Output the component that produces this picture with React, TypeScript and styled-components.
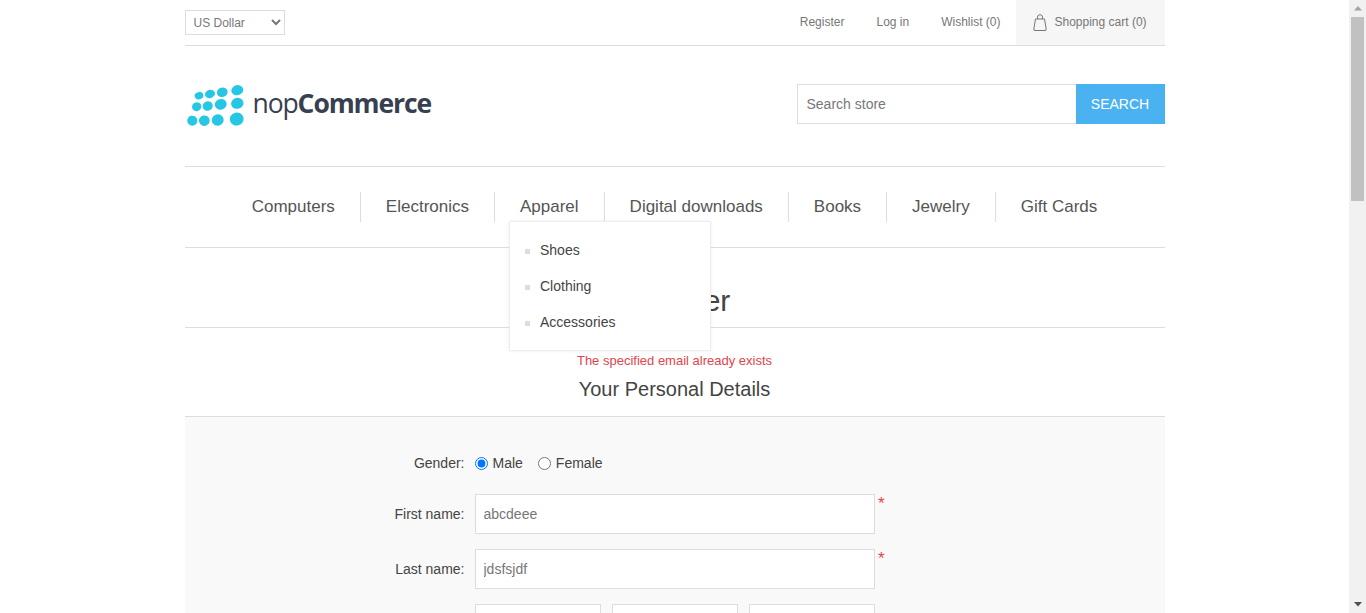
import React from "react";
import styled, { createGlobalStyle } from "styled-components";

const GlobalStyle = createGlobalStyle`
  html, body, #root { height: 100%; }
  body {
    margin: 0;
    overflow: hidden;
    background: #fff;
    color: #444;
    font-family: "Liberation Sans", Arial, sans-serif;
    font-size: 14px;
  }
  * { box-sizing: border-box; }
`;

const Viewport = styled.div`
  display: flex;
  height: 100%;
`;

const Page = styled.div`
  flex: 1;
  min-width: 0;
  overflow: hidden;
`;

const ScrollTrack = styled.div`
  display: flex;
  flex-direction: column;
  align-items: center;
  flex: none;
  width: 17px;
  background: #f1f1f1;
`;

const ScrollArrow = styled.div`
  display: flex;
  align-items: center;
  justify-content: center;
  flex: none;
  width: 17px;
  height: 17px;
`;

const ScrollThumb = styled.div`
  flex: none;
  width: 13px;
  height: 184px;
  background: #c1c1c1;
`;

const ScrollSpacer = styled.div`
  flex: 1;
`;

const Master = styled.div`
  width: 980px;
  margin: 0 auto;
`;

const TopBar = styled.div`
  display: flex;
  align-items: center;
  justify-content: space-between;
  height: 46px;
  border-bottom: 1px solid #ddd;
`;

const CurrencySelect = styled.select`
  width: 100px;
  height: 25px;
  padding: 0 4px;
  border: 1px solid #ddd;
  background: #fff;
  color: #777;
  font-family: inherit;
  font-size: 12px;
`;

const TopLinks = styled.div`
  display: flex;
  align-items: center;
  height: 45px;
`;

const TopLink = styled.a`
  margin-right: 32px;
  padding-bottom: 1px;
  color: #777;
  font-size: 12px;
  text-decoration: none;

  &:last-of-type {
    margin-right: 15px;
  }
`;

const CartLink = styled.div`
  display: flex;
  align-items: center;
  gap: 8px;
  width: 149px;
  height: 45px;
  padding: 0 0 1px 17px;
  background: #f6f6f6;
  color: #777;
  font-size: 12px;
`;

const HeaderRow = styled.div`
  display: flex;
  align-items: center;
  justify-content: space-between;
  height: 120px;
  padding-bottom: 4px;
`;

const Logo = styled.a`
  display: flex;
  align-items: center;
  height: 50px;
  padding-left: 2px;
`;

const LogoMarkBox = styled.svg`
  margin-top: 3px;
`;

const LogoText = styled.span`
  margin: -2px 0 0 9px;
  color: #374050;
  font-family: "Open Sans", sans-serif;
  font-size: 26.5px;
  font-weight: 400;
  letter-spacing: -1.1px;

  b {
    font-weight: 700;
  }
`;

const SearchForm = styled.form`
  display: flex;
  width: 368px;
  height: 40px;
`;

const SearchInput = styled.input`
  flex: 1;
  min-width: 0;
  padding: 0 9px;
  border: 1px solid #ddd;
  border-right: 0;
  outline: none;
  color: #777;
  font-family: inherit;
  font-size: 14px;

  &::placeholder {
    color: #777;
    opacity: 1;
  }
`;

const SearchButton = styled.button`
  width: 89px;
  border: 0;
  background: #4ab2f1;
  color: #fff;
  font-family: inherit;
  font-size: 14px;
`;

const Nav = styled.ul`
  display: flex;
  justify-content: center;
  align-items: center;
  height: 82px;
  margin: 0;
  padding: 0 0 1px;
  border-top: 1px solid #ddd;
  border-bottom: 1px solid #ddd;
  list-style: none;
`;

const NavItem = styled.li`
  position: relative;
  height: 30px;
  padding: 0 25px;
  border-left: 1px solid #ddd;
  color: #555;
  font-size: 17px;
  line-height: 30px;
  white-space: nowrap;

  &:first-child {
    border-left: 0;
  }
`;

const SubMenu = styled.ul`
  position: absolute;
  top: 29px;
  left: 14px;
  z-index: 10;
  width: 202px;
  height: 130px;
  margin: 0;
  padding: 10px 0;
  border: 1px solid #eee;
  background: #fff;
  box-shadow: 0 0 3px rgba(0, 0, 0, 0.08);
  list-style: none;
`;

const SubItem = styled.li`
  display: flex;
  align-items: center;
  height: 36px;
  padding-left: 15px;
  color: #444;
  font-size: 14px;

  &::before {
    content: "";
    width: 5px;
    height: 5px;
    margin-right: 10px;
    margin-top: 3px;
    background: #ddd;
  }
`;

const PageTitle = styled.h1`
  height: 80px;
  margin: 0;
  padding-top: 36px;
  border-bottom: 1px solid #ddd;
  color: #444;
  font-size: 30px;
  font-weight: 400;
  line-height: 34px;
  text-align: center;
`;

const ErrorMessage = styled.div`
  margin-top: 23px;
  color: #e4434b;
  font-size: 13px;
  line-height: 20px;
  text-align: center;
`;

const SectionTitle = styled.h2`
  margin: 4px 0 0;
  padding-bottom: 13px;
  border-bottom: 1px solid #ddd;
  color: #444;
  font-size: 20px;
  font-weight: 400;
  line-height: 28px;
  text-align: center;
`;

const FormPanel = styled.div`
  padding: 30px 0;
  background: #f9f9f9;
`;

const Row = styled.div`
  display: flex;
  align-items: center;
  margin-bottom: 15px;
`;

const GenderRow = styled(Row)`
  height: 32px;
`;

const Label = styled.label`
  flex: none;
  width: 280px;
  margin-right: 10px;
  color: #444;
  font-size: 14px;
  text-align: right;
`;

const RadioLabel = styled.label`
  display: flex;
  align-items: center;
  margin-right: 15px;
  color: #444;
  font-size: 14px;
`;

const Radio = styled.input`
  width: 13px;
  height: 13px;
  margin: 0 5px 0 0;
`;

const TextInput = styled.input`
  width: 400px;
  height: 40px;
  padding: 0 8px;
  border: 1px solid #ddd;
  background: #fff;
  outline: none;
  color: #777;
  font-family: inherit;
  font-size: 14px;
`;

const Required = styled.span`
  align-self: flex-start;
  margin-left: 3.5px;
  color: #e4434b;
  font-size: 17px;
  line-height: 20px;
`;

const DateSelects = styled.div`
  display: flex;
  justify-content: space-between;
  width: 400px;
`;

const DateSelect = styled.select`
  width: 126px;
  height: 40px;
  padding: 0 8px;
  border: 1px solid #ddd;
  background: #fff;
  color: #777;
  font-family: inherit;
  font-size: 14px;
`;

const BagIcon = () => (
  <svg width="14" height="17" viewBox="0 0 14 17" fill="none" stroke="#777" strokeWidth="1">
    <path d="M2.5 5 L0.8 15 Q0.6 16.5 2 16.5 H12 Q13.4 16.5 13.2 15 L11.5 5 Z" />
    <path d="M4.5 5 V3 Q4.5 0.7 7 0.7 Q9.5 0.7 9.5 3 V5" />
  </svg>
);

const dots: [number, number, number, number][] = [
  [12, 10.7, 4.4, 3.7],
  [23, 9, 5.1, 4.1],
  [35.3, 7.3, 5.4, 4.7],
  [50.3, 5.2, 6, 5],
  [9.7, 21.7, 4.7, 4.4],
  [20.7, 21, 5.1, 4.7],
  [33.7, 19.3, 6, 5.3],
  [50.3, 18.3, 6.2, 5.5],
  [5.3, 35.7, 5, 5],
  [17.3, 35.7, 5.3, 5.3],
  [30.7, 35, 6, 5.6],
  [49.7, 34, 6.9, 6.5],
];

const LogoMark = () => (
  <LogoMarkBox width="57" height="42" viewBox="0 0 57 42">
    {dots.map(([cx, cy, rx, ry]) => (
      <ellipse
        key={`${cx}-${cy}`}
        cx={cx}
        cy={cy}
        rx={rx}
        ry={ry}
        fill="#25c7e4"
        transform={`rotate(-15 ${cx} ${cy})`}
      />
    ))}
  </LogoMarkBox>
);

const App: React.FC = () => (
  <Viewport>
    <GlobalStyle />
    <Page>
      <Master>
        <TopBar>
          <CurrencySelect defaultValue="usd">
            <option value="usd">US Dollar</option>
            <option value="eur">Euro</option>
          </CurrencySelect>
          <TopLinks>
            <TopLink>Register</TopLink>
            <TopLink>Log in</TopLink>
            <TopLink>Wishlist (0)</TopLink>
            <CartLink>
              <BagIcon />
              <span>Shopping cart (0)</span>
            </CartLink>
          </TopLinks>
        </TopBar>

        <HeaderRow>
          <Logo>
            <LogoMark />
            <LogoText>
              nop<b>Commerce</b>
            </LogoText>
          </Logo>
          <SearchForm>
            <SearchInput placeholder="Search store" />
            <SearchButton type="button">SEARCH</SearchButton>
          </SearchForm>
        </HeaderRow>

        <Nav>
          <NavItem>Computers</NavItem>
          <NavItem>Electronics</NavItem>
          <NavItem>
            Apparel
            <SubMenu>
              <SubItem>Shoes</SubItem>
              <SubItem>Clothing</SubItem>
              <SubItem>Accessories</SubItem>
            </SubMenu>
          </NavItem>
          <NavItem>Digital downloads</NavItem>
          <NavItem>Books</NavItem>
          <NavItem>Jewelry</NavItem>
          <NavItem>Gift Cards</NavItem>
        </Nav>

        <PageTitle>Register</PageTitle>
        <ErrorMessage>The specified email already exists</ErrorMessage>
        <SectionTitle>Your Personal Details</SectionTitle>

        <FormPanel>
          <GenderRow>
            <Label>Gender:</Label>
            <RadioLabel>
              <Radio type="radio" name="gender" defaultChecked />
              Male
            </RadioLabel>
            <RadioLabel>
              <Radio type="radio" name="gender" />
              Female
            </RadioLabel>
          </GenderRow>
          <Row>
            <Label>First name:</Label>
            <TextInput defaultValue="abcdeee" />
            <Required>*</Required>
          </Row>
          <Row>
            <Label>Last name:</Label>
            <TextInput defaultValue="jdsfsjdf" />
            <Required>*</Required>
          </Row>
          <Row>
            <Label />
            <DateSelects>
              <DateSelect />
              <DateSelect />
              <DateSelect />
            </DateSelects>
          </Row>
        </FormPanel>
      </Master>
    </Page>
    <ScrollTrack>
      <ScrollArrow>
        <svg width="8" height="5" viewBox="0 0 8 5">
          <polygon points="4,0 8,4.5 0,4.5" fill="#a3a3a3" />
        </svg>
      </ScrollArrow>
      <ScrollThumb />
      <ScrollSpacer />
      <ScrollArrow>
        <svg width="8" height="5" viewBox="0 0 8 5">
          <polygon points="0,0 8,0 4,4.5" fill="#505050" />
        </svg>
      </ScrollArrow>
    </ScrollTrack>
  </Viewport>
);

export default App;
